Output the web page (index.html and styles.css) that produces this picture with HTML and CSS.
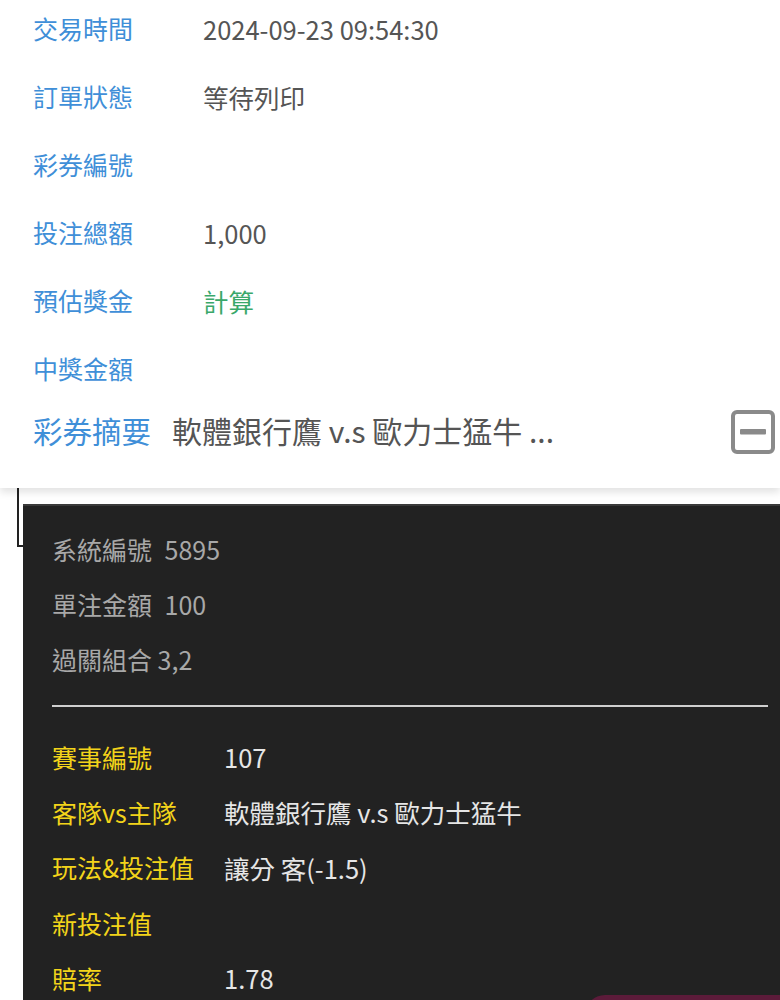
FILE: index.html
```html
<!DOCTYPE html>
<html lang="zh-Hant">
<head>
  <meta charset="UTF-8">
  <meta name="viewport" content="width=device-width, initial-scale=1.0">
  <title>訂單明細</title>
  <link rel="stylesheet" href="styles.css">
</head>
<body>
  <div class="orderCard">
    <div class="infoList">
      <div class="infoRow"><span class="label">交易時間</span><span class="value">2024-09-23 09:54:30</span></div>
      <div class="infoRow"><span class="label">訂單狀態</span><span class="value">等待列印</span></div>
      <div class="infoRow"><span class="label">彩券編號</span><span class="value"></span></div>
      <div class="infoRow"><span class="label">投注總額</span><span class="value">1,000</span></div>
      <div class="infoRow"><span class="label">預估獎金</span><span class="value calc">計算</span></div>
      <div class="infoRow"><span class="label">中獎金額</span><span class="value"></span></div>
    </div>
    <div class="summaryRow">
      <span class="summaryLabel">彩券摘要</span>
      <span class="summaryValue">軟體銀行鷹 v.s 歐力士猛牛 ...</span>
      <svg class="collapseIcon" width="46" height="46" viewBox="0 0 46 46">
        <rect x="3" y="3" width="40" height="40" rx="4" fill="none" stroke="#8a8a8a" stroke-width="4"/>
        <rect x="10" y="20" width="26" height="5.5" rx="1" fill="#8a8a8a"/>
      </svg>
    </div>
  </div>

  <div class="detailWrap">
    <div class="detailPanel">
      <div class="metaRow wide">系統編號 5895</div>
      <div class="metaRow wide">單注金額 100</div>
      <div class="metaRow">過關組合 3,2</div>
      <hr class="divider">
      <div class="gameRow"><span class="gameLabel">賽事編號</span><span class="gameValue">107</span></div>
      <div class="gameRow"><span class="gameLabel">客隊vs主隊</span><span class="gameValue">軟體銀行鷹 v.s 歐力士猛牛</span></div>
      <div class="gameRow"><span class="gameLabel">玩法&amp;投注值</span><span class="gameValue">讓分 客(-1.5)</span></div>
      <div class="gameRow"><span class="gameLabel">新投注值</span><span class="gameValue"></span></div>
      <div class="gameRow"><span class="gameLabel">賠率</span><span class="gameValue">1.78</span></div>
    </div>
  </div>

  <div class="floatButton"></div>
</body>
</html>
```

FILE: styles.css
```css
body {
  margin: 0;
  font-family: "Noto Sans CJK TC", "Noto Sans", sans-serif;
  background-color: #fff;
  overflow: hidden;
  height: 1000px;
  position: relative;
}

.orderCard {
  background-color: #fff;
  padding: 0 4px 29px 33px;
  box-shadow: 0 4px 8px rgba(0, 0, 0, 0.12);
  position: relative;
  z-index: 1;
}

.infoList {
  margin-top: -6px;
}

.infoRow {
  height: 68px;
  display: flex;
  align-items: center;
  font-size: 25px;
}

.label {
  color: #3f8fd8;
  width: 170px;
}

.value {
  color: #555;
  font-size: 25.5px;
}

.value.calc {
  color: #3aa86a;
}

.summaryRow {
  height: 58px;
  margin-top: -1px;
  display: flex;
  align-items: center;
  font-size: 29.5px;
}

.summaryLabel {
  color: #3f8fd8;
  width: 139px;
}

.summaryValue {
  color: #555;
  flex: 1;
  font-size: 30px;
}

.collapseIcon {
  display: block;
  margin-top: 4px;
}

.detailWrap {
  position: relative;
  padding: 16px 0 0 23px;
}

/* bracket line on the left of the panel */
.detailWrap::before {
  content: "";
  position: absolute;
  left: 17px;
  top: 0;
  width: 6px;
  height: 57px;
  border-left: 2px solid #222;
  border-bottom: 2px solid #222;
}

.detailPanel {
  background-color: #222;
  border-top: 2px solid #3a3a3a;
  padding: 16px 12px 40px 29px;
  min-height: 500px;
}

.metaRow {
  height: 55px;
  line-height: 55px;
  font-size: 25px;
  color: #a8a8a8;
}

.metaRow.wide {
  word-spacing: 7px;
}

.divider {
  border: none;
  height: 2px;
  background-color: #cfcfcf;
  margin: 18px 0 22px 0;
}

.gameRow {
  height: 55.3px;
  display: flex;
  align-items: center;
  font-size: 25px;
}

.gameLabel {
  color: #f3d41a;
  width: 172px;
}

.gameValue {
  color: #e6e6e6;
  font-size: 25.5px;
}

.floatButton {
  position: absolute;
  left: 585px;
  top: 995px;
  width: 220px;
  height: 50px;
  border-radius: 20px;
  background-color: #5c1b3a;
}
```
